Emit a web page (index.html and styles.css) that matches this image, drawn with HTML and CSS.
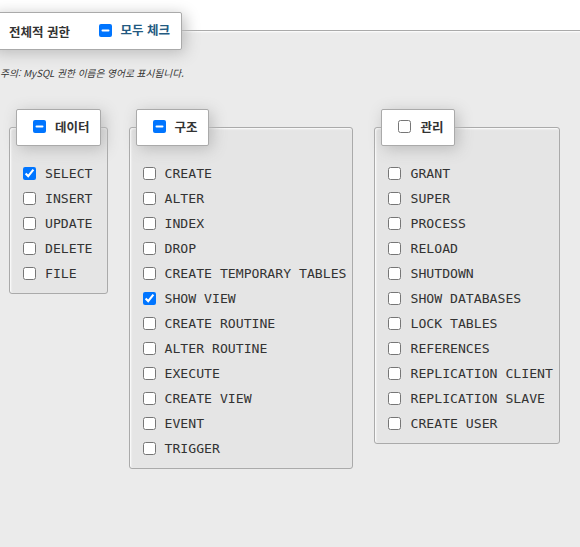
FILE: index.html
```html
<!DOCTYPE html>
<html lang="ko">

<head>
    <meta charset="UTF-8">
    <meta name="viewport" content="width=device-width, initial-scale=1.0">
    <title>전체적 권한</title>
    <link rel="stylesheet" href="styles.css">
</head>

<body>
    <fieldset class="privs">
        <legend class="privs-title">
            <span class="title">전체적 권한</span>
            <label class="check-all"><input type="checkbox" class="partial">모두 체크</label>
        </legend>
        <p class="note"><i>주의: MySQL 권한 이름은 영어로 표시됩니다.</i></p>

        <div class="groups">
            <fieldset class="group">
                <legend><label><input type="checkbox" class="partial">데이터</label></legend>
                <div class="list">
                    <label class="item"><input type="checkbox" checked>SELECT</label>
                    <label class="item"><input type="checkbox">INSERT</label>
                    <label class="item"><input type="checkbox">UPDATE</label>
                    <label class="item"><input type="checkbox">DELETE</label>
                    <label class="item"><input type="checkbox">FILE</label>
                </div>
            </fieldset>

            <fieldset class="group">
                <legend><label><input type="checkbox" class="partial">구조</label></legend>
                <div class="list">
                    <label class="item"><input type="checkbox">CREATE</label>
                    <label class="item"><input type="checkbox">ALTER</label>
                    <label class="item"><input type="checkbox">INDEX</label>
                    <label class="item"><input type="checkbox">DROP</label>
                    <label class="item"><input type="checkbox">CREATE TEMPORARY TABLES</label>
                    <label class="item"><input type="checkbox" checked>SHOW VIEW</label>
                    <label class="item"><input type="checkbox">CREATE ROUTINE</label>
                    <label class="item"><input type="checkbox">ALTER ROUTINE</label>
                    <label class="item"><input type="checkbox">EXECUTE</label>
                    <label class="item"><input type="checkbox">CREATE VIEW</label>
                    <label class="item"><input type="checkbox">EVENT</label>
                    <label class="item"><input type="checkbox">TRIGGER</label>
                </div>
            </fieldset>

            <fieldset class="group">
                <legend><label><input type="checkbox">관리</label></legend>
                <div class="list">
                    <label class="item"><input type="checkbox">GRANT</label>
                    <label class="item"><input type="checkbox">SUPER</label>
                    <label class="item"><input type="checkbox">PROCESS</label>
                    <label class="item"><input type="checkbox">RELOAD</label>
                    <label class="item"><input type="checkbox">SHUTDOWN</label>
                    <label class="item"><input type="checkbox">SHOW DATABASES</label>
                    <label class="item"><input type="checkbox">LOCK TABLES</label>
                    <label class="item"><input type="checkbox">REFERENCES</label>
                    <label class="item"><input type="checkbox">REPLICATION CLIENT</label>
                    <label class="item"><input type="checkbox">REPLICATION SLAVE</label>
                    <label class="item"><input type="checkbox">CREATE USER</label>
                </div>
            </fieldset>
        </div>
    </fieldset>
    <script src="script.js"></script>
</body>

</html>
```

FILE: styles.css
```css
html,
body {
    overflow: hidden;
}

body {
    margin: 0;
    padding: 0;
    background: #fff;
    color: #333;
    font-family: "Noto Sans CJK KR", "Noto Sans", sans-serif;
}

fieldset legend {
    font-weight: bold;
    font-size: 12.5px;
    line-height: 18px;
    color: #333;
    padding: 8px 10px 8px 16px;
    margin: 0;
    border: 1px solid #aaa;
    border-radius: 2px;
    background-color: #fff;
    box-shadow: 3px 3px 15px #bbb;
}

fieldset legend label {
    display: inline-flex;
    align-items: center;
}

fieldset legend input[type="checkbox"] {
    margin: 0 9px 0 0;
}

.privs {
    margin: 12px -20px 0 -30px;
    padding: 0 0 0 20px;
    min-height: 600px;
    border: 1px solid #aaa;
    background: #ebebeb;
    box-shadow: 1px 1px 2px #fff inset;
}

.privs-title {
    padding: 8px 11px 8px 17px;
}

.privs-title .title {
    margin-right: 25px;
}

.check-all {
    color: #235a81;
}

.note {
    margin: 16px 0 0 9px;
    font-size: 9.7px;
    line-height: 14px;
    color: #333;
}

.groups {
    display: flex;
    align-items: flex-start;
    gap: 21px;
    margin: 29px 0 0 18px;
}

.group {
    margin: 0;
    padding: 0 6px 7px;
    min-width: 0;
    border: 1px solid #aaa;
    border-radius: 3px;
    background: #e5e5e5;
    box-shadow: 1px 1px 2px #fff inset;
}

.list {
    padding-top: 15px;
}

.item {
    display: flex;
    align-items: center;
    height: 25px;
    padding-left: 7px;
    font-family: "DejaVu Sans Mono", monospace;
    font-size: 13.15px;
    color: #333;
    white-space: nowrap;
}

.item input {
    margin: 0 9px 0 0;
}
```

FILE: script.js
```js
// legend checkboxes that are only partly checked
document.querySelectorAll(".partial").forEach((box) => {
    box.indeterminate = true;
});
```
